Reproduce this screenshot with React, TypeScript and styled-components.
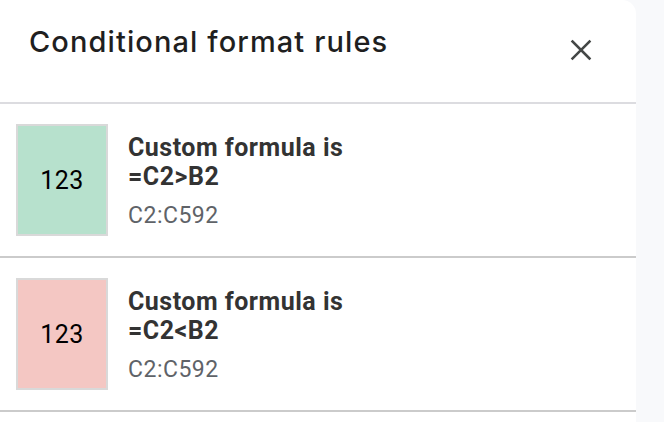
import styled, { createGlobalStyle } from 'styled-components';

const GlobalStyle = createGlobalStyle`
  html, body {
    margin: 0;
    padding: 0;
    background: #f8f9fb;
  }
`;

const Panel = styled.aside`
  width: 636px;
  min-height: 422px;
  background: #ffffff;
  border-top-right-radius: 14px;
  display: flex;
  flex-direction: column;
`;

const Header = styled.header`
  height: 104px;
  box-sizing: border-box;
  display: flex;
  align-items: flex-start;
  justify-content: space-between;
  padding: 0 40px 0 29px;
  border-bottom: 2px solid #dcdce0;

  h1 {
    margin: 24px 0 0;
    font-family: Inter, 'Open Sans', sans-serif;
    font-size: 29px;
    font-weight: 500;
    letter-spacing: 1.1px;
    color: #1f1f1f;
  }
`;

const CloseButton = styled.button`
  margin-top: 35px;
  width: 30px;
  height: 30px;
  padding: 0;
  border: none;
  background: none;
  display: flex;
  align-items: center;
  justify-content: center;
  color: #444746;
  cursor: pointer;
`;

const RuleRow = styled.div`
  height: 154px;
  box-sizing: border-box;
  display: flex;
  align-items: flex-start;
  gap: 20px;
  padding: 20px 16px 18px;
  border-bottom: 2px solid #cbcbcb;
`;

const Swatch = styled.div<{ $fill: string }>`
  width: 92px;
  height: 112px;
  flex-shrink: 0;
  box-sizing: border-box;
  border: 2px solid #d9d9d9;
  background: ${(p) => p.$fill};
  display: flex;
  align-items: center;
  justify-content: center;
  font-family: Roboto, 'Liberation Sans', sans-serif;
  font-size: 25px;
  letter-spacing: 0.5px;
  color: #000000;
`;

const RuleText = styled.div`
  display: flex;
  flex-direction: column;
  padding-top: 9px;
  font-family: Roboto, 'Liberation Sans', sans-serif;

  .condition {
    font-size: 25px;
    font-weight: 700;
    line-height: 29px;
    letter-spacing: 0.5px;
    color: #333333;
  }

  .range {
    margin-top: 11px;
    font-size: 23px;
    line-height: 28px;
    letter-spacing: 0.5px;
    color: #5f6368;
  }
`;

const rules = [
  { id: 'gt', formula: '=C2>B2', range: 'C2:C592', fill: '#b7e1cd' },
  { id: 'lt', formula: '=C2<B2', range: 'C2:C592', fill: '#f4c7c3' },
];

export default function App() {
  return (
    <>
      <GlobalStyle />
      <Panel>
        <Header>
          <h1>Conditional format rules</h1>
          <CloseButton aria-label="Close">
            <svg width="22" height="22" viewBox="0 0 22 22">
              <path d="M2.5 2.5L19.5 19.5M19.5 2.5L2.5 19.5" stroke="currentColor" strokeWidth="2.5" strokeLinecap="square" />
            </svg>
          </CloseButton>
        </Header>
        {rules.map((rule) => (
          <RuleRow key={rule.id}>
            <Swatch $fill={rule.fill}>123</Swatch>
            <RuleText>
              <span className="condition">Custom formula is</span>
              <span className="condition">{rule.formula}</span>
              <span className="range">{rule.range}</span>
            </RuleText>
          </RuleRow>
        ))}
      </Panel>
    </>
  );
}
